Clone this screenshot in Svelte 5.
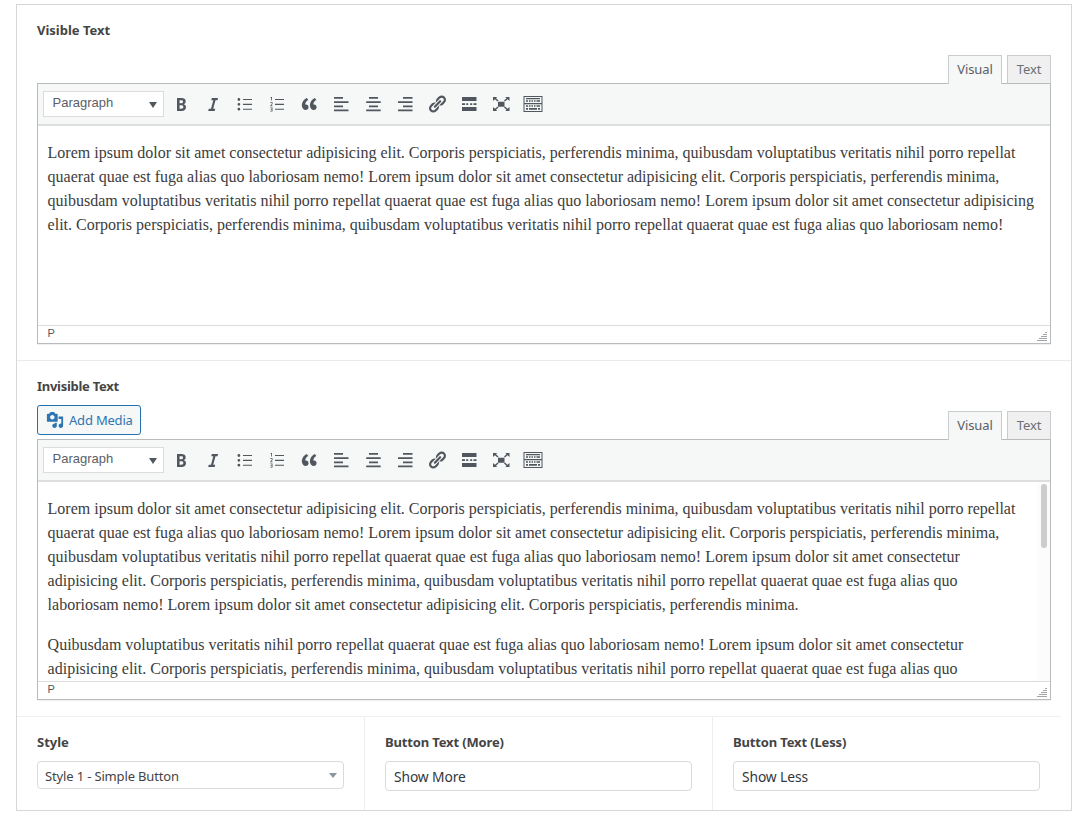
<script>
  const paths = {
    bold: 'M6 4v13h4.54c1.37 0 2.46-.33 3.26-1 .8-.66 1.2-1.58 1.2-2.77 0-.84-.17-1.51-.51-2.01s-.9-.85-1.67-1.03v-.09c.57-.1 1.02-.4 1.36-.9s.51-1.13.51-1.91c0-1.14-.39-1.98-1.17-2.5C12.75 4.26 11.5 4 9.78 4H6zm2.57 5.15V6.26h1.36c.73 0 1.27.11 1.61.32.34.22.51.58.51 1.07 0 .54-.16.92-.47 1.15s-.82.35-1.51.35h-1.5zm0 2.19h1.6c1.44 0 2.16.53 2.16 1.61 0 .6-.17 1.05-.51 1.34s-.86.43-1.57.43H8.57v-3.38z',
    italic: 'M15 4h-6.200l-.5 2.200h2l-2.300 8.600h-2.200l-.6 2.200h6.500l.5-2.200h-2l2.300-8.600h2z',
    bullets: 'M5.300 5.500a1.400 1.400 0 1 1-2.800 0 1.400 1.400 0 0 1 2.800 0zM5.300 10.300a1.400 1.400 0 1 1-2.800 0 1.400 1.400 0 0 1 2.800 0zM5.300 15.200a1.400 1.400 0 1 1-2.800 0 1.400 1.400 0 0 1 2.800 0zM8 5h9v1.100H8zM8 9.800h9v1.100H8zM8 14.700h9v1.100H8z',
    numbers: 'M4.200 3h.8v3.500h-.8V4H3.500v-.6zM3.300 8h2.200v2L4.300 11.500h1.200v.7H3.300v-.8l1.500-1.500v-1.100H3.300zM3.300 13.500h2.200v4H3.300v-.7h1.500v-1H3.800v-.7h1v-.8H3.300zM8 5h9v1.100H8zM8 9.800h9v1.100H8zM8 14.700h9v1.100H8z',
    quote: 'M9.49 13.22c0-.74-.2-1.38-.61-1.9-.62-.78-1.83-.88-2.53-.72-.29-1.65 1.11-3.75 2.92-4.65L7.88 4c-2.73 1.3-5.42 4.28-4.96 8.05C3.21 14.43 4.59 16 6.54 16c.85 0 1.56-.25 2.12-.75s.83-1.18.83-2.03zm8.05 0c0-.74-.2-1.38-.61-1.9-.63-.78-1.83-.88-2.53-.72-.29-1.65 1.11-3.75 2.92-4.65L15.93 4c-2.73 1.3-5.41 4.28-4.95 8.05.29 2.38 1.66 3.95 3.61 3.95.85 0 1.56-.25 2.12-.75s.83-1.18.83-2.03z',
    left: 'M3 3h9v1.800H3zM3 7.200h14.500v1.800H3zM3 11.400h9v1.800H3zM3 15.500h14.500v1.800H3z',
    center: 'M6 3h9v1.800H6zM3.200 7.200h14.500v1.800H3.200zM6 11.400h9v1.800H6zM3.200 15.500h14.500v1.800H3.200z',
    right: 'M8 3h9.500v1.800H8zM3 7.200h14.500v1.800H3zM8 11.400h9.500v1.800H8zM3 15.500h14.500v1.800H3z',
    link: 'M17.74 2.76c1.68 1.69 1.68 4.41 0 6.1l-1.53 1.52c-1.12 1.12-2.7 1.47-4.14 1.09l2.62-2.61.76-.77.76-.76c.84-.84.84-2.2 0-3.04-.84-.85-2.2-.85-3.04 0l-.77.76-3.38 3.38c-.37-1.44-.02-3.02 1.1-4.14l1.52-1.53c1.69-1.68 4.42-1.68 6.1 0zM8.59 13.43l5.34-5.34c.42-.42.42-1.1 0-1.52-.44-.43-1.13-.39-1.53 0l-5.33 5.34c-.42.42-.42 1.1 0 1.52.44.43 1.13.39 1.52 0zm-.76 2.29l4.14-4.15c.38 1.44.03 3.02-1.09 4.14l-1.52 1.53c-1.69 1.68-4.41 1.68-6.1 0-1.68-1.68-1.68-4.42 0-6.1l1.53-1.52c1.12-1.12 2.7-1.47 4.14-1.1l-4.14 4.15c-.85.84-.85 2.2 0 3.05.84.84 2.2.84 3.04 0z',
    more: 'M17.500 7V3H3v4h14.500zM6 11V9.200H3V11h3zm3.200 0V9.200H7.200V11h2zm4 0V9.200h-2V11h2zm4.300 0V9.200h-3V11h3zm0 6v-4H3v4h14.500z',
    full: 'M7 7.800h6.500v5H7zM2 3h4.200L5 4.200l2.500 2.300-.9.9L3.900 5.300 2 7zM18.500 3h-4.200l1.200 1.200-2.500 2.300.9.9 2.700-2.100L18.500 7zM2 17h4.200L5 15.800l2.500-2.300-.9-.9-2.700 2.100L2 13zM18.500 17h-4.200l1.200-1.200-2.500-2.300.9-.9 2.700 2.100 1.900-1.700z',
    keyboard: 'M.5 2h19v16H.5zM1.500 3v14h17V3zM3 4h14v1.200H3zM3 6.300h2v1.500H3zM6 6.300h1.500v1.500H6zM8.500 6.300h1.500v1.500H8.500zM11 6.300h1.500v1.500H11zM13.500 6.300h3.500v1.500h-3.500zM1.500 9h17v1.200h-17zM3 11.300h2v1.500H3zM6 11.300h1.500v1.500H6zM8.500 11.300h1.500v1.500H8.500zM11 11.300h1.500v1.500H11zM13.500 11.300h3.500v1.500h-3.500zM3 14h2v1.700H3zM6 14h8v1.700H6zM15 14h2v1.700h-2z',
    media: 'M13 11V4c0-.55-.45-1-1-1h-1.67L9 1H5L3.67 3H2c-.55 0-1 .45-1 1v7c0 .55.45 1 1 1h10c.55 0 1-.45 1-1zM7 4.5c1.38 0 2.5 1.12 2.5 2.5S8.38 9.5 7 9.5 4.5 8.38 4.5 7 5.62 4.5 7 4.5zM14 6h5v10.5c0 1.38-1.12 2.5-2.5 2.5S14 17.88 14 16.5s1.12-2.5 2.5-2.5c.17 0 .34.02.5.05V9h-3V6zm-4 8.05V13h2v3.5c0 1.38-1.12 2.5-2.5 2.5S7 17.88 7 16.5 8.12 14 9.5 14c.17 0 .34.02.5.05z'
  };
  const tools = ['bold', 'italic', 'bullets', 'numbers', 'quote', 'left', 'center', 'right', 'link', 'more', 'full', 'keyboard'];
  const lead = 'Lorem ipsum dolor sit amet consectetur adipisicing elit. Corporis perspiciatis, perferendis minima';
  const part = 'uibusdam voluptatibus veritatis nihil porro repellat quaerat quae est fuga alias quo';
  const tail = `${part} laboriosam nemo!`;
  const full = `${lead}, q${tail}`;
  const triple = `${full} ${full} ${full}`;
  const fields = [
    { label: 'Visible Text', media: false, scroll: false, body: [triple] },
    { label: 'Invisible Text', media: true, scroll: true, body: [`${triple} ${lead}.`, `Q${tail} ${lead}, q${part}`] }
  ];
</script>

{#snippet icon(name, size)}
  <svg width={size} height={size} viewBox="0 0 20 20" fill="currentColor" fill-rule={name === 'keyboard' ? 'evenodd' : 'nonzero'}><path d={paths[name]} /></svg>
{/snippet}

<main>
  {#each fields as f}
    <section class="field">
      <div class="label" class:tight={f.media}>{f.label}</div>
      <div class="head">
        {#if f.media}
          <button class="media">{@render icon('media', 18)}<span>Add Media</span></button>
        {/if}
        <div class="tabs"><div class="tab">Visual</div><div class="tab second">Text</div></div>
      </div>
      <div class="editor">
        <div class="toolbar">
          <div class="format"><span>Paragraph</span><i></i></div>
          {#each tools as t}<div class="tool">{@render icon(t, 20)}</div>{/each}
        </div>
        <div class="content" class:scroll={f.scroll}>
          {#each f.body as p}<p>{p}</p>{/each}
          {#if f.scroll}<div class="track"><div class="thumb"></div></div>{/if}
        </div>
        <div class="status"><span>P</span>
          <svg width="12" height="12" viewBox="0 0 12 12" fill="none" stroke="#a2a4a6"><path d="M9 1.500h2M7 3.500h4M5 5.500h6M3 7.500h8M1 9.500h10" /></svg>
        </div>
      </div>
    </section>
  {/each}
  <div class="row">
    <div class="cell"><div class="label">Style</div><div class="select"><span>Style 1 - Simple Button</span><i></i></div></div>
    <div class="cell"><div class="label long">Button Text (More)</div><div class="input">Show More</div></div>
    <div class="cell"><div class="label long">Button Text (Less)</div><div class="input">Show Less</div></div>
  </div>
</main>

<style>
  :global(body) { background: #fff; }
  main, main * { box-sizing: border-box; }
  main {
    width: 1056px; height: 807px; margin: 4px 0 0 16px; border: 1px solid #d5d7d9;
    font: 13px/18px "Noto Sans", sans-serif; color: #3c4146;
  }
  svg { display: block; flex: none; }
  .field { height: 356px; padding: 16px 20px 0; border-bottom: 1px solid #ebebeb; }
  .field:nth-child(2) { border-bottom: 0; }
  .label { height: 18px; line-height: 19px; font-size: 13px; font-weight: 700; color: #444; }
  .label.long { letter-spacing: -0.15px; }
  .label.tight { letter-spacing: -0.28px; }
  .head { height: 45px; display: flex; padding-top: 10px; }
  .media {
    width: 104px; height: 30px; padding: 0 0 0 8px; display: flex; align-items: center; gap: 5px;
    border: 1px solid #2271b1; border-radius: 3px; background: #f6f7f7; color: #2c75b0;
    font: 13px "Noto Sans", sans-serif; letter-spacing: -0.2px; white-space: nowrap;
  }
  .tabs { margin: 6px 0 0 auto; display: flex; gap: 5px; height: 29px; position: relative; z-index: 1; }
  .tab { width: 54px; height: 29px; border: 1px solid #c8cccf; border-bottom: 0; background: #f6f7f7; color: #5a6067; text-align: center; line-height: 27px; letter-spacing: -0.1px; }
  .second { width: 44px; height: 28px; background: #f0f0f1; color: #6b7075; }
  .editor { width: 1014px; height: 261px; margin-top: -1px; border: 1px solid #b8bcbe; box-shadow: 0 1px 1px rgba(0,0,0,.06); }
  .toolbar { height: 42px; border-bottom: 2px solid #dcdedf; background: #f6f7f7; display: flex; align-items: center; padding-left: 5px; color: #50575e; }
  .format { width: 121px; height: 26px; margin-right: 1px; padding: 0 6px 3px 8.500px; border: 1px solid #dcdcde; background: #fff; display: flex; align-items: center; justify-content: space-between; font: 13px "Liberation Sans", sans-serif; color: #5a6067; }
  .format i, .select i { border: 4px solid transparent; border-top: 6px solid #50575e; border-bottom: 0; margin-top: 4px; }
  .tool { width: 32px; display: flex; justify-content: center; }
  .content { height: 199px; overflow: hidden; padding: 15px 14px 0 9.600px; font: 16px/24px "Liberation Serif", serif; color: #3c3c3c; position: relative; }
  .content.scroll { padding-right: 25px; }
  p { margin: 0 0 16px; }
  .track { position: absolute; right: 0; top: 0; width: 13px; height: 199px; background: #fcfcfc; }
  .thumb { width: 6px; height: 64px; margin: 2px 0 0 4px; border-radius: 3px; background: #cdcdcd; }
  .status { height: 18px; border-top: 1px solid #dcdcde; display: flex; justify-content: space-between; align-items: flex-start; padding: 0 2px 0 9.500px; font: 11px/15px "Liberation Sans", sans-serif; color: #50575e; }
  .status svg { margin-top: 5px; }
  .row { width: 1044px; height: 94px; border-top: 1px solid #f0f0f0; margin-top: -1px; display: flex; }
  .cell { width: 348px; padding: 16px 20px 0; border-right: 1px solid #eee; }
  .cell:last-child { border-right: 0; }
  .select, .input { width: 307px; height: 30px; margin-top: 10px; border: 1px solid #d8dadc; border-radius: 4px; padding: 0 8px; font-size: 13.800px; line-height: 30px; letter-spacing: -0.1px; color: #32373c; }
  .select { height: 28px; padding: 0 6px 0 7px; display: flex; justify-content: space-between; align-items: center; font-size: 13px; letter-spacing: -0.15px; color: #444; }
  .select span { padding-top: 1px; }
  .select i { border-top-width: 5px; border-top-color: #8b969e; margin-top: 0; }
</style>
